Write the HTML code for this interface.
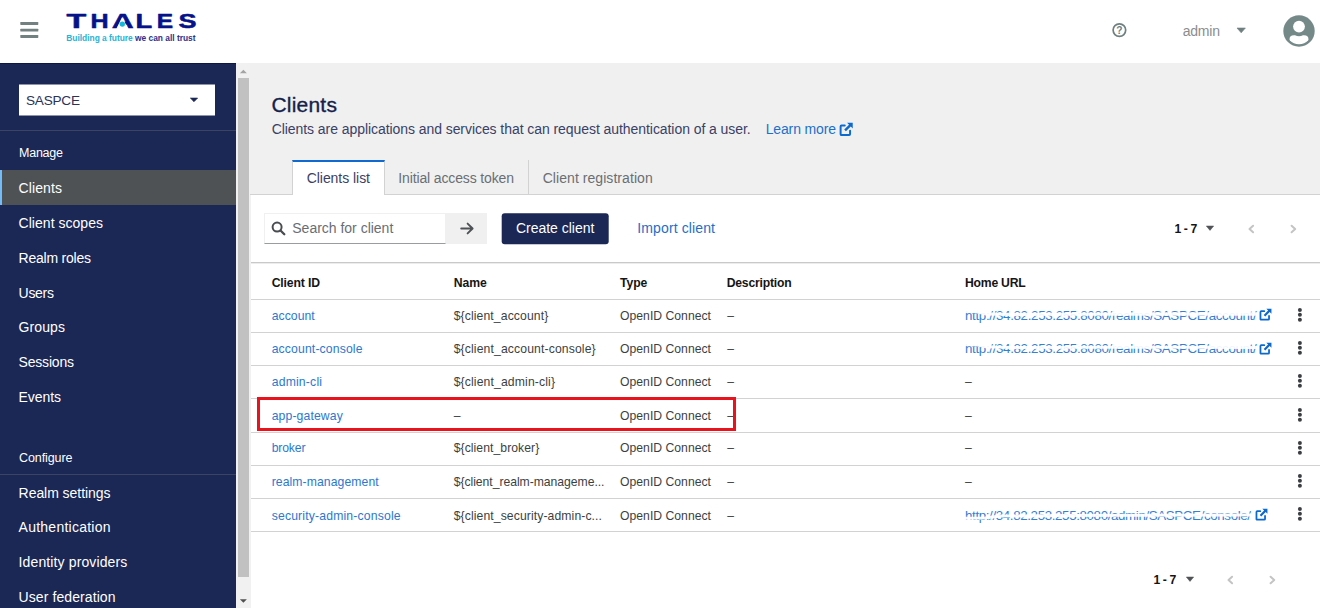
<!DOCTYPE html>
<html lang="en">
<head>
<meta charset="utf-8">
<title>Clients</title>
<style>
html,body{margin:0;padding:0;}
body{width:1320px;height:608px;overflow:hidden;position:relative;background:#fff;font-family:"Liberation Sans",sans-serif;}
.abs{position:absolute;}
.t{position:absolute;white-space:nowrap;}
#header{left:0;top:0;width:1320px;height:63px;background:#fff;}
#sidebar{left:0;top:63px;width:236px;height:545px;background:#1b2755;border-top:1px solid #0e1846;box-sizing:border-box;}
#scroll{left:236px;top:63px;width:15px;height:545px;background:#f1f1f1;}
#thumb{left:238px;top:78px;width:11px;height:499px;background:#c1c1c1;}
#main{left:251px;top:63px;width:1069px;height:545px;background:#fff;}
#pagehead{left:250px;top:63px;width:1070px;height:131px;background:#f0f0f0;}
#tabline{left:250px;top:194px;width:1070px;height:1px;background:#d2d2d2;}
#tab1{left:292px;top:160px;width:93px;height:35px;background:#fff;border-top:2px solid #0f6bd0;border-left:1px solid #d2d2d2;border-right:1px solid #d2d2d2;box-sizing:border-box;}
#tabdiv{left:528px;top:160px;width:1px;height:34px;background:#d2d2d2;}
.hl{position:absolute;left:251px;width:1069px;height:1px;background:#d2d2d2;}
#navactive{left:0;top:170px;width:236px;height:35px;background:#4f5255;}
#navbar{left:0;top:170px;width:2px;height:35px;background:#73bcf7;}
.navdiv{position:absolute;left:0;width:236px;height:1px;background:#3c4463;}
#select{left:19px;top:84px;width:196px;height:31px;background:#fff;transform:translateY(0.5px);}
#search{left:264px;top:213px;width:182px;height:31px;background:#fff;border:1px solid #f0f0f0;border-bottom:1px solid #9a9c9e;box-sizing:border-box;}
#gobtn{left:446px;top:213px;width:41px;height:31px;background:#f0f0f0;}
#create{left:501px;top:213px;width:106.8px;height:31px;transform:translate(0.7px,0.2px);background:#1b2755;border-radius:3px;}
#redbox{left:257px;top:397px;width:479px;height:34px;border:3px solid #e8131c;box-sizing:border-box;}
</style>
</head>
<body>
<div id="header" class="abs"></div>
<div id="sidebar" class="abs"></div>
<div id="scroll" class="abs"></div>
<div id="thumb" class="abs"></div>
<div id="main" class="abs"></div>
<div id="pagehead" class="abs"></div>
<div id="tabline" class="abs"></div>
<div id="tab1" class="abs"></div>
<div id="tabdiv" class="abs"></div>
<div id="navactive" class="abs"></div>
<div id="navbar" class="abs"></div>
<div class="navdiv" style="top:129.5px"></div>
<div class="navdiv" style="top:473.5px"></div>
<div id="select" class="abs"></div>
<div id="search" class="abs"></div>
<div id="gobtn" class="abs"></div>
<div id="create" class="abs"></div>
<!-- table lines -->
<div class="hl" style="top:262px;background:#c9c9c9"></div>
<div class="hl" style="top:263px;background:#ececec"></div>
<div class="hl" style="top:298.7px"></div>
<div class="hl" style="top:332px"></div>
<div class="hl" style="top:365.3px"></div>
<div class="hl" style="top:398px"></div>
<div class="hl" style="top:432px"></div>
<div class="hl" style="top:465.2px"></div>
<div class="hl" style="top:498.4px"></div>
<div class="hl" style="top:531px"></div>
<span class="t" id="t0" style="left:26.0px;top:91.9px;font-size:13.6px;line-height:18px;color:#2b3358;letter-spacing:-0.231px;">SASPCE</span>
<span class="t" id="t1" style="left:19.0px;top:145.0px;font-size:12.5px;line-height:16px;color:#fff;letter-spacing:-0.237px;">Manage</span>
<span class="t" id="t2" style="left:18.6px;top:179.0px;font-size:14px;line-height:18px;color:#fff;letter-spacing:0.101px;">Clients</span>
<span class="t" id="t3" style="left:18.6px;top:214.0px;font-size:14px;line-height:18px;color:#fff;letter-spacing:0.029px;">Client scopes</span>
<span class="t" id="t4" style="left:18.6px;top:248.5px;font-size:14px;line-height:18px;color:#fff;letter-spacing:-0.230px;">Realm roles</span>
<span class="t" id="t5" style="left:18.6px;top:283.5px;font-size:14px;line-height:18px;color:#fff;letter-spacing:-0.291px;">Users</span>
<span class="t" id="t6" style="left:18.6px;top:318.0px;font-size:14px;line-height:18px;color:#fff;letter-spacing:0.096px;">Groups</span>
<span class="t" id="t7" style="left:18.6px;top:353.0px;font-size:14px;line-height:18px;color:#fff;letter-spacing:-0.202px;">Sessions</span>
<span class="t" id="t8" style="left:18.6px;top:388.0px;font-size:14px;line-height:18px;color:#fff;letter-spacing:-0.083px;">Events</span>
<span class="t" id="t9" style="left:19.0px;top:450.0px;font-size:12.5px;line-height:16px;color:#fff;letter-spacing:-0.088px;">Configure</span>
<span class="t" id="t10" style="left:18.6px;top:483.5px;font-size:14px;line-height:18px;color:#fff;letter-spacing:-0.053px;">Realm settings</span>
<span class="t" id="t11" style="left:18.6px;top:518.3px;font-size:14px;line-height:18px;color:#fff;letter-spacing:0.244px;">Authentication</span>
<span class="t" id="t12" style="left:18.6px;top:553.2px;font-size:14px;line-height:18px;color:#fff;letter-spacing:0.123px;">Identity providers</span>
<span class="t" id="t13" style="left:18.6px;top:588.0px;font-size:14px;line-height:18px;color:#fff;letter-spacing:0.084px;">User federation</span>
<span class="t" id="t14" style="left:1182.7px;top:22.0px;font-size:14px;line-height:18px;color:#8a8d90;letter-spacing:-0.210px;">admin</span>
<span class="t" id="t15" style="left:271.5px;top:91.3px;font-size:21px;line-height:27px;color:#151f4b;-webkit-text-stroke:0.35px #151f4b;letter-spacing:0.199px;">Clients</span>
<span class="t" id="t16" style="left:271.7px;top:120.3px;font-size:14px;line-height:18px;color:#3a4166;letter-spacing:-0.064px;">Clients are applications and services that can request authentication of a user.</span>
<span class="t" id="t17" style="left:765.7px;top:120.3px;font-size:14px;line-height:18px;color:#1d70c9;letter-spacing:-0.144px;">Learn more</span>
<span class="t" id="t18" style="left:306.7px;top:168.8px;font-size:14px;line-height:18px;color:#3a4166;letter-spacing:-0.045px;">Clients list</span>
<span class="t" id="t19" style="left:398.3px;top:168.8px;font-size:14px;line-height:18px;color:#6a6e73;letter-spacing:-0.137px;">Initial access token</span>
<span class="t" id="t20" style="left:542.7px;top:168.8px;font-size:14px;line-height:18px;color:#6a6e73;letter-spacing:0.059px;">Client registration</span>
<span class="t" id="t21" style="left:292.3px;top:218.9px;font-size:14px;line-height:18px;color:#6a6e73;letter-spacing:-0.011px;">Search for client</span>
<span class="t" id="t22" style="left:516.0px;top:218.9px;font-size:14px;line-height:18px;color:#fff;letter-spacing:-0.024px;">Create client</span>
<span class="t" id="t23" style="left:637.3px;top:218.9px;font-size:14px;line-height:18px;color:#1d70c9;letter-spacing:0.121px;">Import client</span>
<span class="t" id="t24" style="left:1174.5px;top:220.5px;font-size:12.2px;line-height:16px;color:#151515;font-weight:700;letter-spacing:-0.398px;">1 - 7</span>
<span class="t" id="t25" style="left:1153.5px;top:571.7px;font-size:12.2px;line-height:16px;color:#151515;font-weight:700;letter-spacing:-0.398px;">1 - 7</span>
<span class="t" id="t26" style="left:271.7px;top:274.7px;font-size:12.2px;line-height:16px;color:#151515;font-weight:700;letter-spacing:-0.142px;">Client ID</span>
<span class="t" id="t27" style="left:453.7px;top:274.7px;font-size:12.2px;line-height:16px;color:#151515;font-weight:700;letter-spacing:-0.068px;">Name</span>
<span class="t" id="t28" style="left:620.0px;top:274.7px;font-size:12.2px;line-height:16px;color:#151515;font-weight:700;letter-spacing:-0.082px;">Type</span>
<span class="t" id="t29" style="left:726.7px;top:274.7px;font-size:12.2px;line-height:16px;color:#151515;font-weight:700;letter-spacing:-0.205px;">Description</span>
<span class="t" id="t30" style="left:965.0px;top:274.7px;font-size:12.2px;line-height:16px;color:#151515;font-weight:700;letter-spacing:-0.228px;">Home URL</span>
<span class="t" id="t31" style="left:271.7px;top:307.5px;font-size:12.2px;line-height:16px;color:#2b78cf;letter-spacing:0.052px;">account</span>
<span class="t" id="t32" style="left:453.7px;top:307.5px;font-size:12.2px;line-height:16px;color:#3c3f42;letter-spacing:0.110px;">${client_account}</span>
<span class="t" id="t33" style="left:620.0px;top:307.5px;font-size:12.2px;line-height:16px;color:#3c3f42;letter-spacing:0.016px;">OpenID Connect</span>
<span class="t" id="t34" style="left:727.3px;top:307.5px;font-size:12.2px;line-height:16px;color:#3c3f42;">–</span>
<span class="t" id="t35" style="left:965.0px;top:306.8px;font-size:13.3px;line-height:17px;color:#3580d3;letter-spacing:-0.321px;">http://34.82.253.255:8080/realms/SASPCE/account/</span>
<span class="t" id="t36" style="left:271.7px;top:340.8px;font-size:12.2px;line-height:16px;color:#2b78cf;letter-spacing:0.145px;">account-console</span>
<span class="t" id="t37" style="left:453.7px;top:340.8px;font-size:12.2px;line-height:16px;color:#3c3f42;letter-spacing:0.129px;">${client_account-console}</span>
<span class="t" id="t38" style="left:620.0px;top:340.8px;font-size:12.2px;line-height:16px;color:#3c3f42;letter-spacing:0.016px;">OpenID Connect</span>
<span class="t" id="t39" style="left:727.3px;top:340.8px;font-size:12.2px;line-height:16px;color:#3c3f42;">–</span>
<span class="t" id="t40" style="left:965.0px;top:340.1px;font-size:13.3px;line-height:17px;color:#3580d3;letter-spacing:-0.321px;">http://34.82.253.255:8080/realms/SASPCE/account/</span>
<span class="t" id="t41" style="left:271.7px;top:374.4px;font-size:12.2px;line-height:16px;color:#2b78cf;letter-spacing:0.192px;">admin-cli</span>
<span class="t" id="t42" style="left:453.7px;top:374.4px;font-size:12.2px;line-height:16px;color:#3c3f42;letter-spacing:0.132px;">${client_admin-cli}</span>
<span class="t" id="t43" style="left:620.0px;top:374.4px;font-size:12.2px;line-height:16px;color:#3c3f42;letter-spacing:0.016px;">OpenID Connect</span>
<span class="t" id="t44" style="left:727.3px;top:374.4px;font-size:12.2px;line-height:16px;color:#3c3f42;">–</span>
<span class="t" id="t45" style="left:965.0px;top:374.4px;font-size:12.2px;line-height:16px;color:#3c3f42;">–</span>
<span class="t" id="t46" style="left:271.7px;top:408.3px;font-size:12.2px;line-height:16px;color:#2b78cf;letter-spacing:0.130px;">app-gateway</span>
<span class="t" id="t47" style="left:453.7px;top:408.3px;font-size:12.2px;line-height:16px;color:#3c3f42;">–</span>
<span class="t" id="t48" style="left:620.0px;top:408.3px;font-size:12.2px;line-height:16px;color:#3c3f42;letter-spacing:0.016px;">OpenID Connect</span>
<span class="t" id="t49" style="left:727.3px;top:408.3px;font-size:12.2px;line-height:16px;color:#3c3f42;">–</span>
<span class="t" id="t50" style="left:965.0px;top:408.3px;font-size:12.2px;line-height:16px;color:#3c3f42;">–</span>
<span class="t" id="t51" style="left:271.7px;top:440.4px;font-size:12.2px;line-height:16px;color:#2b78cf;letter-spacing:-0.149px;">broker</span>
<span class="t" id="t52" style="left:453.7px;top:440.4px;font-size:12.2px;line-height:16px;color:#3c3f42;letter-spacing:0.060px;">${client_broker}</span>
<span class="t" id="t53" style="left:620.0px;top:440.4px;font-size:12.2px;line-height:16px;color:#3c3f42;letter-spacing:0.016px;">OpenID Connect</span>
<span class="t" id="t54" style="left:727.3px;top:440.4px;font-size:12.2px;line-height:16px;color:#3c3f42;">–</span>
<span class="t" id="t55" style="left:965.0px;top:440.4px;font-size:12.2px;line-height:16px;color:#3c3f42;">–</span>
<span class="t" id="t56" style="left:271.7px;top:474.0px;font-size:12.2px;line-height:16px;color:#2b78cf;letter-spacing:0.089px;">realm-management</span>
<span class="t" id="t57" style="left:453.7px;top:474.0px;font-size:12.2px;line-height:16px;color:#3c3f42;letter-spacing:-0.038px;">${client_realm-manageme...</span>
<span class="t" id="t58" style="left:620.0px;top:474.0px;font-size:12.2px;line-height:16px;color:#3c3f42;letter-spacing:0.016px;">OpenID Connect</span>
<span class="t" id="t59" style="left:727.3px;top:474.0px;font-size:12.2px;line-height:16px;color:#3c3f42;">–</span>
<span class="t" id="t60" style="left:965.0px;top:474.0px;font-size:12.2px;line-height:16px;color:#3c3f42;">–</span>
<span class="t" id="t61" style="left:271.7px;top:507.8px;font-size:12.2px;line-height:16px;color:#2b78cf;letter-spacing:0.171px;">security-admin-console</span>
<span class="t" id="t62" style="left:453.7px;top:507.8px;font-size:12.2px;line-height:16px;color:#3c3f42;letter-spacing:0.098px;">${client_security-admin-c...</span>
<span class="t" id="t63" style="left:620.0px;top:507.8px;font-size:12.2px;line-height:16px;color:#3c3f42;letter-spacing:0.016px;">OpenID Connect</span>
<span class="t" id="t64" style="left:727.3px;top:507.8px;font-size:12.2px;line-height:16px;color:#3c3f42;">–</span>
<span class="t" id="t65" style="left:965.0px;top:507.1px;font-size:13.3px;line-height:17px;color:#3580d3;letter-spacing:-0.355px;">http://34.82.253.255:8080/admin/SASPCE/console/</span>
<div id="redbox" class="abs"></div>
<svg class="abs" style="left:20px;top:21px" width="19" height="18" viewBox="0 0 19 18" ><g fill="#72807f"><rect x="0.3" y="1" width="18" height="2.9" rx="0.6"/><rect x="0.3" y="7.7" width="18" height="2.9" rx="0.6"/><rect x="0.3" y="14" width="18" height="2.9" rx="0.6"/></g></svg>
<svg class="abs" style="left:60px;top:8px" width="140" height="40" viewBox="0 0 140 40" role="img" aria-label="THALES"><title>THALES</title><g font-family="Liberation Sans, sans-serif" font-weight="700" font-size="19.6" fill="#06128a" stroke="#06128a" stroke-width="0.5" stroke-linejoin="round"><text transform="translate(6.46,19.85) scale(1.650,1)">T</text><text transform="translate(30.47,19.85) scale(1.279,1)">H</text><text transform="translate(51.66,19.85) scale(1.551,1)">A</text><text transform="translate(75.44,19.85) scale(1.397,1)">L</text><text transform="translate(96.69,19.85) scale(1.251,1)">E</text><text transform="translate(118.39,19.85) scale(1.378,1)">S</text></g><polygon points="62.2,8.9 56.3,20.8 68.1,20.8" fill="#fff"/><circle cx="62.3" cy="16.05" r="2.65" fill="#16b7d8"/><text x="6.3" y="33.2" font-family="Liberation Sans, sans-serif" font-weight="700" font-size="8.4" textLength="129.2" lengthAdjust="spacingAndGlyphs"><tspan fill="#22b5d8">Building a future</tspan><tspan fill="#2b3190"> we can all trust</tspan></text></svg>
<svg class="abs" style="left:1111px;top:22px" width="17" height="17" viewBox="0 0 17 17" ><circle cx="8.4" cy="8.1" r="6.3" fill="none" stroke="#6f7f7f" stroke-width="1.7"/><text x="8.4" y="11.8" text-anchor="middle" font-family="Liberation Sans, sans-serif" font-weight="700" font-size="10.2" fill="#6f7f7f">?</text></svg>
<svg class="abs" style="left:1236px;top:27px" width="11" height="7" viewBox="0 0 11 7" ><path d="M1 1 L9.4 1 L5.2 5.8 Z" fill="#6f7f7f" stroke="#6f7f7f" stroke-width="0.6" stroke-linejoin="round"/></svg>
<svg class="abs" style="left:1282.7px;top:14.6px" width="32" height="32" viewBox="0 0 32 32" ><defs><clipPath id="avc"><circle cx="16" cy="16" r="13.2"/></clipPath></defs><circle cx="16" cy="16" r="15.7" fill="#768989"/><circle cx="16" cy="11.6" r="5.9" fill="#fff"/><path clip-path="url(#avc)" d="M6.5 32 L6.5 24.5 Q6.5 20.3 11 20.3 L12 20.3 Q16 22 20 20.3 L21 20.3 Q25.5 20.3 25.5 24.5 L25.5 32 Z" fill="#fff"/></svg>
<svg class="abs" style="left:188px;top:96.4px" width="12" height="8" viewBox="0 0 12 8" ><path d="M2.4 2.1 L9.6 2.1 L6 5.7 Z" fill="#1b2755" stroke="#1b2755" stroke-width="0.7" stroke-linejoin="round"/></svg>
<svg class="abs" style="left:238px;top:67px" width="12" height="8" viewBox="0 0 12 8" ><path d="M1.9 6.3 L8.9 6.3 L5.4 2.8 Z" fill="#a3a3a3"/></svg>
<svg class="abs" style="left:238px;top:597px" width="12" height="8" viewBox="0 0 12 8" ><path d="M1.9 2.2 L8.9 2.2 L5.4 5.7 Z" fill="#505050"/></svg>
<svg class="abs" style="left:271px;top:220.6px" width="16" height="16" viewBox="0 0 16 16" ><circle cx="6.1" cy="6.1" r="4.5" fill="none" stroke="#4a4d50" stroke-width="2"/><path d="M9.5 9.5 L13.3 13.3" stroke="#4a4d50" stroke-width="2.3" stroke-linecap="round"/></svg>
<svg class="abs" style="left:459.5px;top:221.6px" width="15" height="13" viewBox="0 0 15 13" ><path d="M1.2 6.5 L12.2 6.5 M7.6 1.6 L12.6 6.5 L7.6 11.4" fill="none" stroke="#4f5255" stroke-width="1.9" stroke-linecap="round" stroke-linejoin="round"/></svg>
<svg class="abs" style="left:839.2px;top:121.6px" width="15" height="15" viewBox="0 0 13 13" ><path d="M9.6 7.6 L9.6 10.4 Q9.6 11.2 8.8 11.2 L2.2 11.2 Q1.4 11.2 1.4 10.4 L1.4 3.8 Q1.4 3 2.2 3 L5 3" fill="none" stroke="#0c69cd" stroke-width="1.7" stroke-linecap="round"/><path d="M11.9 0.6 L11.9 5.6 L10.2 3.9 L6 8.1 L4.5 6.6 L8.7 2.4 L7 0.6 Z" fill="#0c69cd"/></svg>
<svg class="abs" style="left:1258.8px;top:308.4px" width="13.6" height="13.6" viewBox="0 0 13 13" ><path d="M9.6 7.6 L9.6 10.4 Q9.6 11.2 8.8 11.2 L2.2 11.2 Q1.4 11.2 1.4 10.4 L1.4 3.8 Q1.4 3 2.2 3 L5 3" fill="none" stroke="#0c69cd" stroke-width="1.7" stroke-linecap="round"/><path d="M11.9 0.6 L11.9 5.6 L10.2 3.9 L6 8.1 L4.5 6.6 L8.7 2.4 L7 0.6 Z" fill="#0c69cd"/></svg>
<svg class="abs" style="left:1258.8px;top:341.7px" width="13.6" height="13.6" viewBox="0 0 13 13" ><path d="M9.6 7.6 L9.6 10.4 Q9.6 11.2 8.8 11.2 L2.2 11.2 Q1.4 11.2 1.4 10.4 L1.4 3.8 Q1.4 3 2.2 3 L5 3" fill="none" stroke="#0c69cd" stroke-width="1.7" stroke-linecap="round"/><path d="M11.9 0.6 L11.9 5.6 L10.2 3.9 L6 8.1 L4.5 6.6 L8.7 2.4 L7 0.6 Z" fill="#0c69cd"/></svg>
<svg class="abs" style="left:1255.2px;top:507.7px" width="13.6" height="13.6" viewBox="0 0 13 13" ><path d="M9.6 7.6 L9.6 10.4 Q9.6 11.2 8.8 11.2 L2.2 11.2 Q1.4 11.2 1.4 10.4 L1.4 3.8 Q1.4 3 2.2 3 L5 3" fill="none" stroke="#0c69cd" stroke-width="1.7" stroke-linecap="round"/><path d="M11.9 0.6 L11.9 5.6 L10.2 3.9 L6 8.1 L4.5 6.6 L8.7 2.4 L7 0.6 Z" fill="#0c69cd"/></svg>
<svg class="abs" style="left:1297px;top:306.8px" width="6" height="16" viewBox="0 0 6 16" ><g fill="#3c3f42"><circle cx="2.9" cy="2.9" r="2"/><circle cx="2.9" cy="7.8" r="2"/><circle cx="2.9" cy="12.7" r="2"/></g></svg>
<svg class="abs" style="left:1297px;top:340.05px" width="6" height="16" viewBox="0 0 6 16" ><g fill="#3c3f42"><circle cx="2.9" cy="2.9" r="2"/><circle cx="2.9" cy="7.8" r="2"/><circle cx="2.9" cy="12.7" r="2"/></g></svg>
<svg class="abs" style="left:1297px;top:373.3px" width="6" height="16" viewBox="0 0 6 16" ><g fill="#3c3f42"><circle cx="2.9" cy="2.9" r="2"/><circle cx="2.9" cy="7.8" r="2"/><circle cx="2.9" cy="12.7" r="2"/></g></svg>
<svg class="abs" style="left:1297px;top:406.55px" width="6" height="16" viewBox="0 0 6 16" ><g fill="#3c3f42"><circle cx="2.9" cy="2.9" r="2"/><circle cx="2.9" cy="7.8" r="2"/><circle cx="2.9" cy="12.7" r="2"/></g></svg>
<svg class="abs" style="left:1297px;top:439.8px" width="6" height="16" viewBox="0 0 6 16" ><g fill="#3c3f42"><circle cx="2.9" cy="2.9" r="2"/><circle cx="2.9" cy="7.8" r="2"/><circle cx="2.9" cy="12.7" r="2"/></g></svg>
<svg class="abs" style="left:1297px;top:473.05px" width="6" height="16" viewBox="0 0 6 16" ><g fill="#3c3f42"><circle cx="2.9" cy="2.9" r="2"/><circle cx="2.9" cy="7.8" r="2"/><circle cx="2.9" cy="12.7" r="2"/></g></svg>
<svg class="abs" style="left:1297px;top:506.29999999999995px" width="6" height="16" viewBox="0 0 6 16" ><g fill="#3c3f42"><circle cx="2.9" cy="2.9" r="2"/><circle cx="2.9" cy="7.8" r="2"/><circle cx="2.9" cy="12.7" r="2"/></g></svg>
<svg class="abs" style="left:1205.3px;top:225.3px" width="10" height="7" viewBox="0 0 10 7" ><path d="M1.3 1 L8.7 1 L5 5.4 Z" fill="#505356" stroke="#505356" stroke-width="0.5" stroke-linejoin="round"/></svg>
<svg class="abs" style="left:1246.6px;top:222.5px" width="9" height="12" viewBox="0 0 9 12" ><path d="M6.1 2.7 L2.5 6 L6.1 9.3" fill="none" stroke="#c4c4c4" stroke-width="2" stroke-linecap="round" stroke-linejoin="round"/></svg>
<svg class="abs" style="left:1288.5px;top:222.5px" width="9" height="12" viewBox="0 0 9 12" ><path d="M2.6 2.7 L6.2 6 L2.6 9.3" fill="none" stroke="#c4c4c4" stroke-width="2" stroke-linecap="round" stroke-linejoin="round"/></svg>
<svg class="abs" style="left:1184.7px;top:576.4px" width="10" height="7" viewBox="0 0 10 7" ><path d="M1.3 1 L8.7 1 L5 5.4 Z" fill="#505356" stroke="#505356" stroke-width="0.5" stroke-linejoin="round"/></svg>
<svg class="abs" style="left:1225.8px;top:573.6px" width="9" height="12" viewBox="0 0 9 12" ><path d="M6.1 2.7 L2.5 6 L6.1 9.3" fill="none" stroke="#c4c4c4" stroke-width="2" stroke-linecap="round" stroke-linejoin="round"/></svg>
<svg class="abs" style="left:1267.6px;top:573.6px" width="9" height="12" viewBox="0 0 9 12" ><path d="M2.6 2.7 L6.2 6 L2.6 9.3" fill="none" stroke="#c4c4c4" stroke-width="2" stroke-linecap="round" stroke-linejoin="round"/></svg>
<svg class="abs" style="left:0;top:0" width="1320" height="608" viewBox="0 0 1320 608"><path d="M964.0 311.3 L976.0 311.6 L986.0 313.8 L1010.0 314.4 L1100.0 314.2 L1180.0 314.0 L1257.0 314.0" fill="none" stroke="#fff" stroke-width="3.3" stroke-linecap="round" stroke-linejoin="round" opacity="0.93"/></svg>
<svg class="abs" style="left:0;top:0" width="1320" height="608" viewBox="0 0 1320 608"><path d="M964.0 344.6 L976.0 344.9 L986.0 346.8 L1010.0 347.4 L1100.0 347.2 L1180.0 347.2 L1257.0 347.4" fill="none" stroke="#fff" stroke-width="3.0" stroke-linecap="round" stroke-linejoin="round" opacity="0.93"/></svg>
<svg class="abs" style="left:0;top:0" width="1320" height="608" viewBox="0 0 1320 608"><path d="M964.0 518.2 L985.0 517.9 L1000.0 516.0 L1060.0 515.6 L1150.0 515.3 L1252.0 515.0" fill="none" stroke="#fff" stroke-width="3.0" stroke-linecap="round" stroke-linejoin="round" opacity="0.93"/></svg>
</body>
</html>
